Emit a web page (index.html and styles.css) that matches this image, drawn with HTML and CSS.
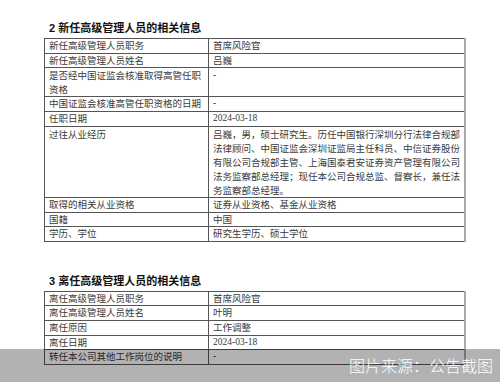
FILE: index.html
```html
<!DOCTYPE html>
<html lang="zh-CN">
<head>
<meta charset="utf-8">
<link rel="stylesheet" href="styles.css">
</head>
<body>
<div class="page">
  <section class="sec sec-first">
    <h2 class="title">2 新任高级管理人员的相关信息</h2>
    <table class="info">
      <tr><td class="k">新任高级管理人员职务</td><td class="v">首席风险官</td></tr>
      <tr><td class="k">新任高级管理人员姓名</td><td class="v">吕巍</td></tr>
      <tr class="multi"><td class="k">是否经中国证监会核准取得高管任职资格</td><td class="v lat">-</td></tr>
      <tr><td class="k">中国证监会核准高管任职资格的日期</td><td class="v lat">-</td></tr>
      <tr><td class="k">任职日期</td><td class="v lat">2024-03-18</td></tr>
      <tr class="multi"><td class="k">过往从业经历</td><td class="v">吕巍，男，硕士研究生。历任中国银行深圳分行法律合规部法律顾问、中国证监会深圳证监局主任科员、中信证券股份有限公司合规部主管、上海国泰君安证券资产管理有限公司法务监察部总经理；现任本公司合规总监、督察长，兼任法务监察部总经理。</td></tr>
      <tr><td class="k">取得的相关从业资格</td><td class="v">证券从业资格、基金从业资格</td></tr>
      <tr><td class="k">国籍</td><td class="v">中国</td></tr>
      <tr><td class="k">学历、学位</td><td class="v">研究生学历、硕士学位</td></tr>
    </table>
  </section>
  <section class="sec sec-second">
    <h2 class="title">3 离任高级管理人员的相关信息</h2>
    <table class="info">
      <tr><td class="k">离任高级管理人员职务</td><td class="v">首席风险官</td></tr>
      <tr><td class="k">离任高级管理人员姓名</td><td class="v">叶明</td></tr>
      <tr><td class="k">离任原因</td><td class="v">工作调整</td></tr>
      <tr><td class="k">离任日期</td><td class="v lat">2024-03-18</td></tr>
      <tr><td class="k">转任本公司其他工作岗位的说明</td><td class="v lat">-</td></tr>
    </table>
  </section>
</div>
<div class="caption">图片来源：公告截图</div>
</body>
</html>
```
FILE: styles.css
```css
html, body {
  margin: 0;
  padding: 0;
  background: #ffffff;
}
body {
  width: 500px;
  height: 382px;
  overflow: hidden;
  position: relative;
  font-family: "Liberation Serif", "Noto Sans CJK SC", serif;
  color: #3a3a3a;
}
.page {
  padding-left: 44px;
}
.sec-first {
  padding-top: 21px;
}
.sec-second {
  padding-top: 32px;
}
.title {
  margin: 0 0 3px 5px;
  font-family: "Liberation Sans", "Noto Sans CJK SC", sans-serif;
  font-size: 11px;
  line-height: 14px;
  font-weight: bold;
  color: #111;
}
.info {
  border-collapse: collapse;
  width: 422px;
  table-layout: fixed;
  border-left: 1px solid #555;
  border-right: 2px solid #aaa;
}
.info td {
  border-top: 1px solid #555;
  border-bottom: 1px solid #555;
  padding: 0 4px 0 4px;
  font-size: 9.5px;
  line-height: 13.6px;
  vertical-align: top;
  font-family: "Noto Sans CJK SC", sans-serif;
  font-weight: normal;
}
.info .multi td {
  line-height: 14.1px;
}
.info td.k {
  width: 155px;
  border-right: 1px solid #555;
}
.info td.v {
  padding-right: 1px;
}
.info td.lat {
  font-family: "Liberation Serif", "Noto Sans CJK SC", serif;
}
.caption {
  position: absolute;
  left: 0;
  right: 0;
  top: 349px;
  bottom: 0;
  background: rgba(0, 0, 0, 0.3);
  color: #ffffff;
  font-family: "Noto Sans CJK SC", sans-serif;
  font-size: 16px;
  font-weight: 300;
  line-height: 33px;
  text-align: right;
  padding-right: 7px;
}
```
